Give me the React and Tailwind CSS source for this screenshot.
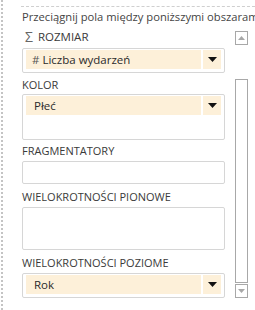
import React from "react";

function Pill({ icon, label }) {
  return (
    <div className="flex h-[19px] gap-[2px]">
      <div className="flex flex-1 items-center bg-[#fdf0d9] pl-[6px] text-[11.5px] leading-[19px] text-[#2b2b2b]">
        {icon && <span className="mr-[3px] text-[#555]">#</span>}
        <span className={icon ? "" : "pl-[2px]"}>{label}</span>
      </div>
      <div className="flex w-[18px] items-center justify-center bg-[#fdf0d9]">
        <svg width="9" height="5" viewBox="0 0 9 5"><path d="M0 0h9L4.5 5z" fill="#111" /></svg>
      </div>
    </div>
  );
}

function Label({ children, mt }) {
  return <div className={`h-[14px] whitespace-nowrap text-[11px] leading-[14px] text-[#3a3a3a] ${mt}`}>{children}</div>;
}

function Box({ h, mt, children }) {
  return (
    <div className={`rounded-[2px] border border-[#d6d6d6] bg-white px-[3px] pt-[1px] ${h} ${mt}`}>{children}</div>
  );
}

export default function App() {
  return (
    <div
      className="relative flex h-[310px] w-[255px] overflow-hidden bg-white text-[12px]"
      style={{ fontFamily: '"Segoe UI", "Open Sans", "Noto Sans", sans-serif' }}
    >
      <div className="ml-[1px] w-[2px] border-l-2 border-dotted border-[#c4c4c4]" />
      <div className="ml-[18px] flex w-[234px] flex-col">
        <div className="mt-[6px] border-t border-dashed border-[#cfcfcf]" />
        <div className="ml-[1px] mt-[3px] h-[14px] whitespace-nowrap text-[11.2px] leading-[14px] text-[#444]">
          Przeciągnij pola między poniższymi obszarami:
        </div>
        <div className="ml-[1px] flex">
          <div className="flex w-[203px] flex-col">
            <div className="mt-[6px] flex h-[14px] items-center whitespace-nowrap text-[11.5px] leading-[14px] text-[#3a3a3a]">
              <span className="ml-[3px] mr-[5px] text-[14px] text-[#666]">Σ</span>
              ROZMIAR
            </div>
            <Box h="h-[25px]" mt="mt-[4px]">
              <Pill icon label="Liczba wydarzeń" />
            </Box>
            <Label mt="mt-[5px]">KOLOR</Label>
            <Box h="h-[46px]" mt="mt-[2px]">
              <Pill label="Płeć" />
            </Box>
            <Label mt="mt-[4px]">FRAGMENTATORY</Label>
            <Box h="h-[23px]" mt="mt-[3px]" />
            <Label mt="mt-[6px]">WIELOKROTNOŚCI PIONOWE</Label>
            <Box h="h-[43px]" mt="mt-[3px]" />
            <Label mt="mt-[6px]">WIELOKROTNOŚCI POZIOME</Label>
            <Box h="h-[25px]" mt="mt-[3px]">
              <Pill label="Rok" />
            </Box>
          </div>
          <div className="ml-[10px] mt-[7px] flex w-[13px] flex-col">
            <div className="flex h-[14px] w-[13px] items-center justify-center border border-[#a8a8a8]">
              <svg width="7" height="4" viewBox="0 0 7 4"><path d="M3.5 0L7 4H0z" fill="#a8a8a8" /></svg>
            </div>
            <div className="mt-[34px] h-[204px] border border-[#a8a8a8]" />
            <div className="mt-[1px] flex h-[14px] w-[13px] items-center justify-center border border-[#a8a8a8]">
              <svg width="7" height="4" viewBox="0 0 7 4"><path d="M0 0h7L3.5 4z" fill="#a8a8a8" /></svg>
            </div>
          </div>
        </div>
      </div>
    </div>
  );
}
